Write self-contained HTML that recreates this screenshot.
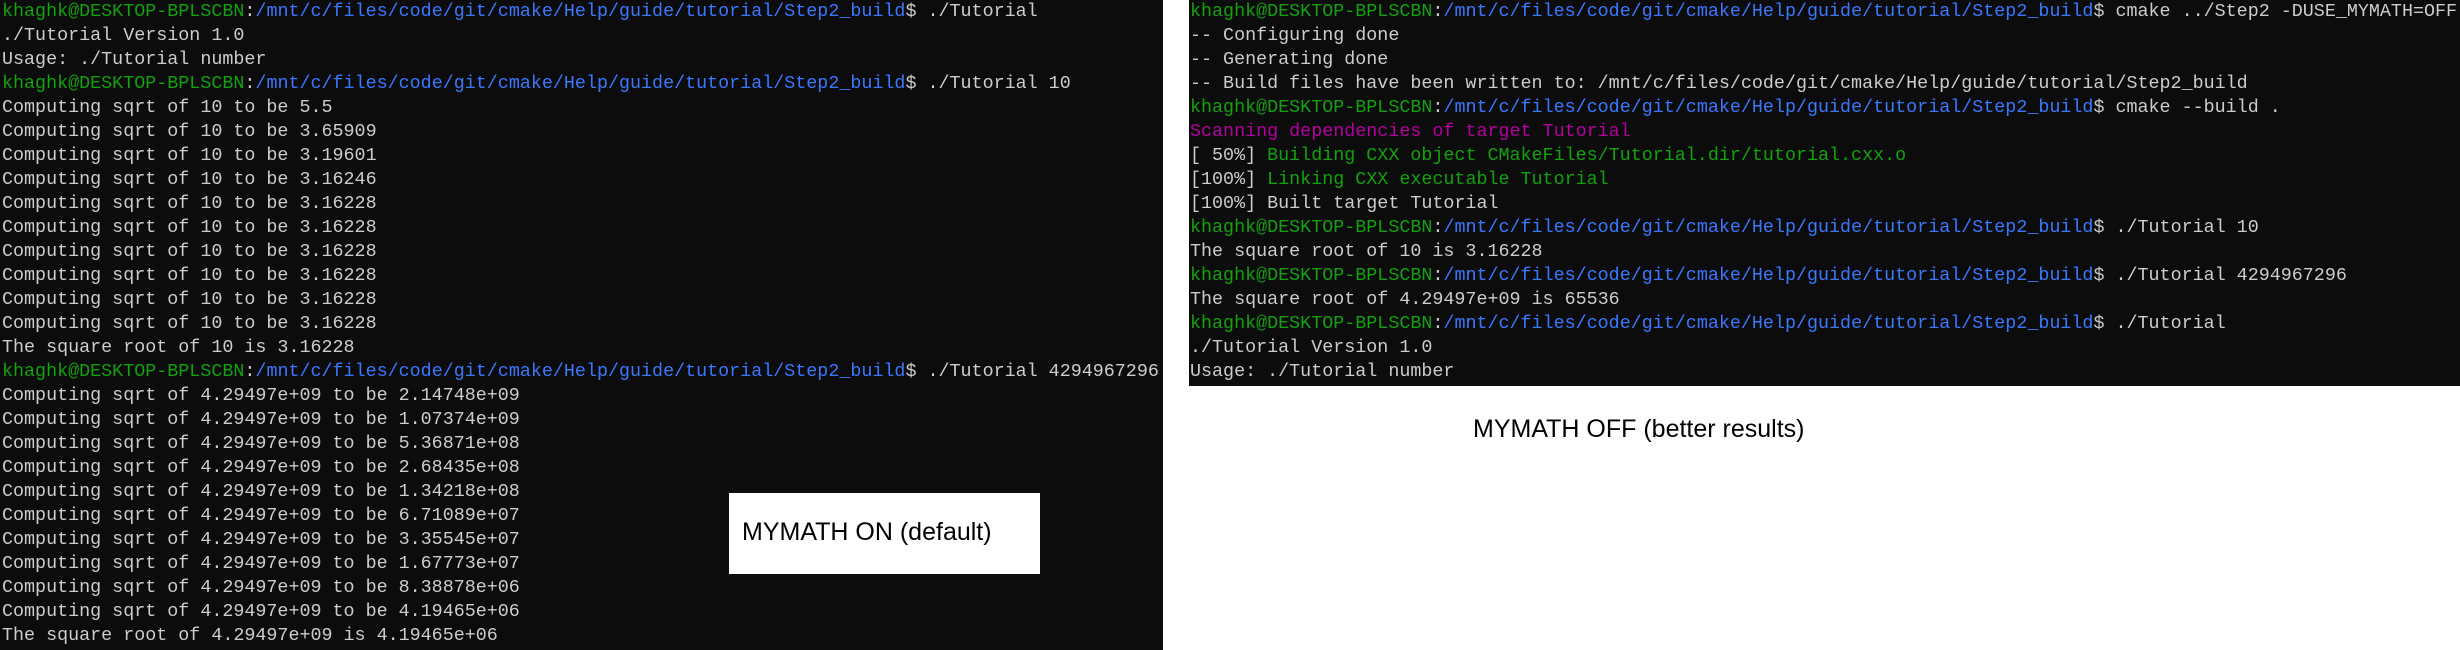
<!DOCTYPE html>
<html><head><meta charset="utf-8"><style>
html,body{margin:0;padding:0;background:#fff;width:2460px;height:650px;overflow:hidden;position:relative}
.t{position:absolute;background:#0c0c0c;color:#cccccc;font-family:"Liberation Mono",monospace;font-size:18.37px;line-height:24px;white-space:pre;overflow:hidden}
.g{color:#13a10e}.b{color:#3b78ff}.m{color:#b4009e}
.cap{position:absolute;font-family:"Liberation Sans",sans-serif;color:#000;white-space:nowrap}
</style></head><body>
<div class="t" style="left:0;top:0;width:1163px;height:650px;padding-left:2px;box-sizing:border-box"><span class="g">khaghk@DESKTOP-BPLSCBN</span>:<span class="b">/mnt/c/files/code/git/cmake/Help/guide/tutorial/Step2_build</span>$ ./Tutorial
./Tutorial Version 1.0
Usage: ./Tutorial number
<span class="g">khaghk@DESKTOP-BPLSCBN</span>:<span class="b">/mnt/c/files/code/git/cmake/Help/guide/tutorial/Step2_build</span>$ ./Tutorial 10
Computing sqrt of 10 to be 5.5
Computing sqrt of 10 to be 3.65909
Computing sqrt of 10 to be 3.19601
Computing sqrt of 10 to be 3.16246
Computing sqrt of 10 to be 3.16228
Computing sqrt of 10 to be 3.16228
Computing sqrt of 10 to be 3.16228
Computing sqrt of 10 to be 3.16228
Computing sqrt of 10 to be 3.16228
Computing sqrt of 10 to be 3.16228
The square root of 10 is 3.16228
<span class="g">khaghk@DESKTOP-BPLSCBN</span>:<span class="b">/mnt/c/files/code/git/cmake/Help/guide/tutorial/Step2_build</span>$ ./Tutorial 4294967296
Computing sqrt of 4.29497e+09 to be 2.14748e+09
Computing sqrt of 4.29497e+09 to be 1.07374e+09
Computing sqrt of 4.29497e+09 to be 5.36871e+08
Computing sqrt of 4.29497e+09 to be 2.68435e+08
Computing sqrt of 4.29497e+09 to be 1.34218e+08
Computing sqrt of 4.29497e+09 to be 6.71089e+07
Computing sqrt of 4.29497e+09 to be 3.35545e+07
Computing sqrt of 4.29497e+09 to be 1.67773e+07
Computing sqrt of 4.29497e+09 to be 8.38878e+06
Computing sqrt of 4.29497e+09 to be 4.19465e+06
The square root of 4.29497e+09 is 4.19465e+06
<span class="g">khaghk@DESKTOP-BPLSCBN</span>:<span class="b">/mnt/c/files/code/git/cmake/Help/guide/tutorial/Step2_build</span>$</div>
<div style="position:absolute;left:729px;top:493px;width:311px;height:81px;background:#fff"></div>
<div class="cap" style="left:742px;top:518px;font-size:25px">MYMATH ON (default)</div>
<div class="t" style="left:1189px;top:0;width:1271px;height:386px;padding-left:1px;box-sizing:border-box"><span class="g">khaghk@DESKTOP-BPLSCBN</span>:<span class="b">/mnt/c/files/code/git/cmake/Help/guide/tutorial/Step2_build</span>$ cmake ../Step2 -DUSE_MYMATH=OFF
-- Configuring done
-- Generating done
-- Build files have been written to: /mnt/c/files/code/git/cmake/Help/guide/tutorial/Step2_build
<span class="g">khaghk@DESKTOP-BPLSCBN</span>:<span class="b">/mnt/c/files/code/git/cmake/Help/guide/tutorial/Step2_build</span>$ cmake --build .
<span class="m">Scanning dependencies of target Tutorial</span>
[ 50%] <span class="g">Building CXX object CMakeFiles/Tutorial.dir/tutorial.cxx.o</span>
[100%] <span class="g">Linking CXX executable Tutorial</span>
[100%] Built target Tutorial
<span class="g">khaghk@DESKTOP-BPLSCBN</span>:<span class="b">/mnt/c/files/code/git/cmake/Help/guide/tutorial/Step2_build</span>$ ./Tutorial 10
The square root of 10 is 3.16228
<span class="g">khaghk@DESKTOP-BPLSCBN</span>:<span class="b">/mnt/c/files/code/git/cmake/Help/guide/tutorial/Step2_build</span>$ ./Tutorial 4294967296
The square root of 4.29497e+09 is 65536
<span class="g">khaghk@DESKTOP-BPLSCBN</span>:<span class="b">/mnt/c/files/code/git/cmake/Help/guide/tutorial/Step2_build</span>$ ./Tutorial
./Tutorial Version 1.0
Usage: ./Tutorial number</div>
<div class="cap" style="left:1473px;top:415px;font-size:25px">MYMATH OFF (better results)</div>
</body></html>
